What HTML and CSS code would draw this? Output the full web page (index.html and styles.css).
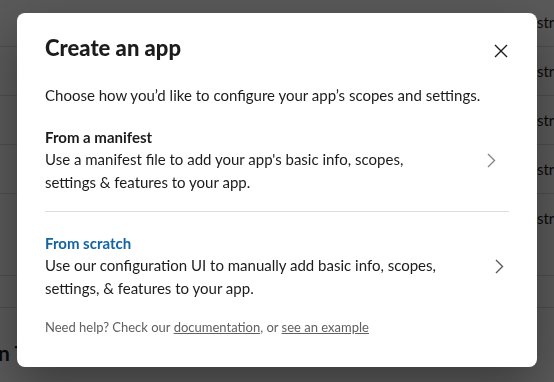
FILE: index.html
```html
<!DOCTYPE html>
<html lang="en">
<head>
  <meta charset="UTF-8" />
  <meta name="viewport" content="width=device-width, initial-scale=1.0"/>
  <title>Create an app</title>
  <link rel="stylesheet" href="styles.css">
</head>
<body>
  <div class="page">
    <div class="page-row"><span class="cell-name"></span><span class="cell-type">string</span></div>
    <div class="page-row"><span class="cell-name"></span><span class="cell-type">string</span></div>
    <div class="page-row"><span class="cell-name"></span><span class="cell-type">string</span></div>
    <div class="page-row"><span class="cell-name"></span><span class="cell-type">string</span></div>
    <div class="page-row page-row--tall"><span class="cell-name"></span><span class="cell-type">string</span></div>
    <div class="page-bar"></div>
    <h2 class="page-heading">Verification Token</h2>
  </div>

  <div class="overlay">
    <div class="modal" role="dialog">
      <div class="modal-header">
        <h1>Create an app</h1>
        <button class="close" aria-label="Close">
          <svg width="14" height="14" viewBox="0 0 14 14">
            <path d="M1 1 L13 13 M13 1 L1 13" stroke="#1d1c1d" stroke-width="1.4" fill="none"/>
          </svg>
        </button>
      </div>

      <p class="intro">Choose how you’d like to configure your app’s scopes and settings.</p>

      <a class="option option--first" href="#">
        <div class="option-text">
          <div class="option-title">From a manifest</div>
          <div class="option-desc">Use a manifest file to add your app's basic info, scopes, settings &amp; features to your app.</div>
        </div>
        <svg class="chevron" width="9" height="15" viewBox="0 0 9 15">
          <path d="M1 1 L7.5 7.5 L1 14" stroke="#868686" stroke-width="1.4" fill="none"/>
        </svg>
      </a>

      <a class="option option--last" href="#">
        <div class="option-text">
          <div class="option-title option-title--link">From scratch</div>
          <div class="option-desc">Use our configuration UI to manually add basic info, scopes, settings, &amp; features to your app.</div>
        </div>
        <svg class="chevron" width="9" height="15" viewBox="0 0 9 15">
          <path d="M1 1 L7.5 7.5 L1 14" stroke="#5a5a5a" stroke-width="1.4" fill="none"/>
        </svg>
      </a>

      <p class="help">Need help? Check our <a href="#">documentation</a>, or <a href="#">see an example</a></p>
    </div>
  </div>
</body>
</html>
```

FILE: styles.css
```css
body {
  font-family: 'Lato', 'Noto Sans', sans-serif;
  margin: 0;
  padding: 0;
  background-color: #fff;
  color: #1d1c1d;
  overflow: hidden;
  height: 382px;
}

/* page behind the dialog */
.page {
  margin-top: -2px;
}

.page-row {
  display: flex;
  align-items: center;
  height: 48px;
  border-bottom: 1px solid #dcdcdc;
}

.page-row--tall {
  padding-bottom: 33px;
}

.cell-name {
  width: 537px;
  flex-shrink: 0;
}

.cell-type {
  font-size: 15px;
  white-space: nowrap;
}

.page-bar {
  height: 31px;
  border-bottom: 1px solid #dcdcdc;
}

.page-heading {
  margin: 32px 0 0 -98px;
  font-size: 21px;
  font-weight: 700;
  white-space: nowrap;
}

/* dialog */
.overlay {
  position: fixed;
  inset: 0;
  padding-top: 13px;
  background-color: rgba(0, 0, 0, 0.65);
  display: flex;
  align-items: flex-start;
  justify-content: center;
}

.modal {
  width: 520px;
  box-sizing: border-box;
  padding: 20px 28px 31px;
  background-color: #fff;
  border-radius: 8px;
  box-shadow: 0 18px 48px rgba(0, 0, 0, 0.35);
}

.modal-header {
  display: flex;
  justify-content: space-between;
  align-items: flex-start;
}

.modal-header h1 {
  margin: 0;
  font-size: 22px;
  font-weight: 900;
  line-height: 30px;
}

.close {
  margin: 11px 1px 0 0;
  padding: 0;
  border: none;
  background: none;
  cursor: pointer;
  display: flex;
}

.intro {
  margin: 21px 0 0;
  font-size: 15px;
  line-height: 22px;
}

.option {
  display: flex;
  justify-content: space-between;
  align-items: center;
  padding: 20px 0 18px;
  color: inherit;
  text-decoration: none;
}

.option--first {
  padding-bottom: 17px;
  border-bottom: 1px solid #dddddd;
}

.option--first .chevron {
  margin-right: 13px;
}

.option--last .chevron {
  margin-right: 5px;
}

.option-text {
  max-width: 400px;
}

.option-title {
  font-size: 15px;
  font-weight: 700;
  line-height: 22px;
}

.option-title--link {
  color: #1264a3;
}

.option-desc {
  font-size: 15px;
  line-height: 23px;
}

.help {
  margin: 0;
  font-size: 13px;
  line-height: 18px;
  color: #616061;
}

.help a {
  color: #616061;
  text-decoration: underline;
}
```
